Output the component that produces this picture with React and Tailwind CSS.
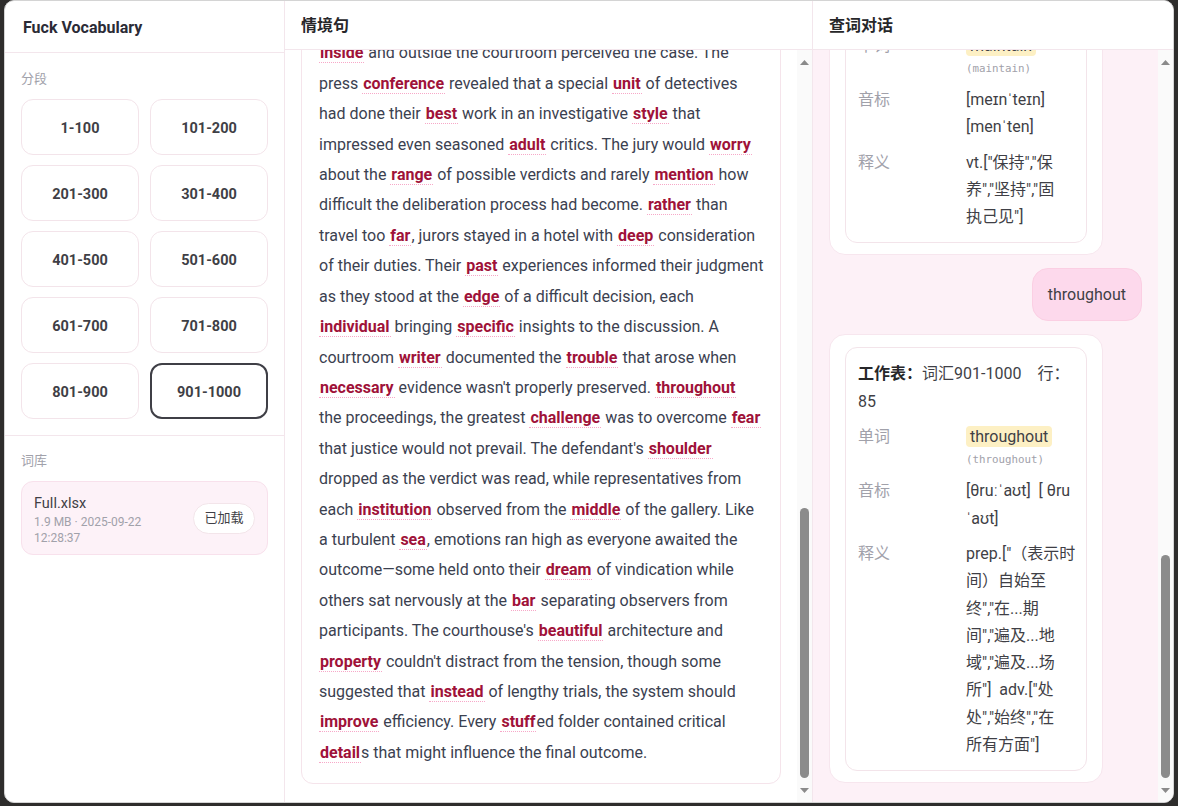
import React, { useLayoutEffect, useRef } from 'react'

const FONT = { fontFamily: 'Roboto, "Noto Sans CJK SC", sans-serif' }

const RANGES = ['1-100', '101-200', '201-300', '301-400', '401-500', '501-600', '601-700', '701-800', '801-900', '901-1000']

// passage, one entry per rendered line; [word] marks a vocabulary hit
const PASSAGE = [
  'The [trial] had drawn attention from every corner of the city,',
  'and for weeks the local papers could [discuss] little else. Each',
  '[morning] a crowd gathered on the marble steps, and the clerks',
  'kept a careful [record] of who came and went. Nobody could',
  'quite [explain] why this case, of all cases, had captured the',
  'public [mood] so completely, yet it was plain to see how people',
  '[inside] and outside the courtroom perceived the case. The',
  'press [conference] revealed that a special [unit] of detectives',
  'had done their [best] work in an investigative [style] that',
  'impressed even seasoned [adult] critics. The jury would [worry]',
  'about the [range] of possible verdicts and rarely [mention] how',
  'difficult the deliberation process had become. [rather] than',
  'travel too [far], jurors stayed in a hotel with [deep] consideration',
  'of their duties. Their [past] experiences informed their judgment',
  'as they stood at the [edge] of a difficult decision, each',
  '[individual] bringing [specific] insights to the discussion. A',
  'courtroom [writer] documented the [trouble] that arose when',
  "[necessary] evidence wasn't properly preserved. [throughout]",
  'the proceedings, the greatest [challenge] was to overcome [fear]',
  "that justice would not prevail. The defendant's [shoulder]",
  'dropped as the verdict was read, while representatives from',
  'each [institution] observed from the [middle] of the gallery. Like',
  'a turbulent [sea], emotions ran high as everyone awaited the',
  'outcome\u2014some held onto their [dream] of vindication while',
  'others sat nervously at the [bar] separating observers from',
  "participants. The courthouse's [beautiful] architecture and",
  "[property] couldn't distract from the tension, though some",
  'suggested that [instead] of lengthy trials, the system should',
  '[improve] efficiency. Every [stuff]ed folder contained critical',
  '[detail]s that might influence the final outcome.',
]

const CHAT = [
  { from: 'user', text: 'fear' },
  {
    from: 'bot',
    sheet: '901-1000',
    row: 84,
    word: 'fear',
    phon: ['[fɪə(r)]  [fɪr]'],
    def: ['n.["害怕","恐惧","担', '心"]  v.["害怕","担', '心"]'],
  },
  { from: 'user', text: 'maintain' },
  {
    from: 'bot',
    sheet: '901-1000',
    row: 62,
    word: 'maintain',
    phon: ['[meɪnˈteɪn]', '[menˈten]'],
    def: ['vt.["保持","保', '养","坚持","固', '执己见"]'],
  },
  { from: 'user', text: 'throughout' },
  {
    from: 'bot',
    sheet: '901-1000',
    row: 85,
    word: 'throughout',
    phon: ['[θruːˈaʊt]  [ θru', 'ˈaʊt]'],
    def: ['prep.["（表示时', '间）自始至', '终","在...期', '间","遍及...地', '域","遍及...场', '所"]  adv.["处', '处","始终","在', '所有方面"]'],
  },
]

function Line({ text }) {
  const parts = text.split(/(\[[^\]]+\])/)
  return (
    <div className="whitespace-nowrap">
      {parts.map((p, i) =>
        p.startsWith('[') && p.endsWith(']') ? (
          <span key={i} className="border-b border-dotted border-[#f7a8c8] px-px font-bold text-[#9f1239]">
            {p.slice(1, -1)}
          </span>
        ) : (
          <span key={i}>{p}</span>
        )
      )}
    </div>
  )
}

function Arrow({ down }) {
  return (
    <div className="flex h-[24px] items-center justify-center">
      <svg width="9" height="5" viewBox="0 0 9 5">
        <path d={down ? 'M0 0H9L4.5 5Z' : 'M4.5 0L9 5H0Z'} fill="#8a8a8a" />
      </svg>
    </div>
  )
}

function ScrollRail({ thumb }) {
  return (
    <div className="flex w-[15px] shrink-0 flex-col bg-[#fafafa]">
      <Arrow />
      <div className="flex flex-1 flex-col items-center justify-end">
        <div className={`w-[9px] rounded-full bg-[#8b8b8b] ${thumb}`} />
      </div>
      <Arrow down />
    </div>
  )
}

function Row({ label, children }) {
  return (
    <div className="flex">
      <div className="w-[108px] shrink-0 text-[#a1a1aa]">{label}</div>
      <div className="min-w-0 flex-1">{children}</div>
    </div>
  )
}

function BotCard({ m }) {
  return (
    <div className="w-[274px] rounded-2xl border border-[#f7e6ee] bg-white px-[15px] pb-[11px] pt-3">
      <div className="flex flex-col gap-2 rounded-xl border border-[#f3e4ea] p-3 text-[16px] leading-[27.3px] text-[#3f3f46]">
        <div>
          <span className="font-bold text-[#27272a]">工作表：</span>词汇{m.sheet}
          <span className="ml-[16px]">行：</span>
          {m.row}
        </div>
        <Row label="单词">
          <div>
            <span className="inline-block rounded-[4px] bg-[#fdf0c4] px-1 leading-[21px]">{m.word}</span>
          </div>
          <div className="text-[10.8px] leading-[19px] text-[#a1a1aa]" style={{ fontFamily: '"DejaVu Sans Mono", monospace' }}>
            ({m.word})
          </div>
        </Row>
        <Row label="音标">
          {m.phon.map((l, i) => (
            <div key={i} className="whitespace-pre">{l}</div>
          ))}
        </Row>
        <Row label="释义">
          {m.def.map((l, i) => (
            <div key={i} className="whitespace-pre">{l}</div>
          ))}
        </Row>
      </div>
    </div>
  )
}

export default function App() {
  const textRef = useRef(null)
  const chatRef = useRef(null)

  useLayoutEffect(() => {
    // both panes sit scrolled to their latest content
    if (textRef.current) textRef.current.scrollTop = textRef.current.scrollHeight
    if (chatRef.current) chatRef.current.scrollTop = chatRef.current.scrollHeight
  }, [])

  return (
    <div className="h-[806px] w-[1178px] bg-[#2e2d2c] pl-[4px]" style={FONT}>
      <div className="flex h-[803px] w-[1170px] overflow-hidden rounded-[10px] border border-[#d4d4d4] bg-white">
        {/* Sidebar */}
        <aside className="flex w-[280px] shrink-0 flex-col border-r border-[#f3e6ec]">
          <div className="flex h-[52px] shrink-0 items-center border-b border-[#f3e6ec] px-[18px] pt-[3px] text-[16px] font-bold text-[#2b2b36]">
            Fuck Vocabulary
          </div>
          <div className="px-4 pb-4 pt-4">
            <div className="mb-[10px] text-[13px] leading-5 text-[#a1a1aa]">分段</div>
            <div className="grid grid-cols-2 gap-x-[11px] gap-y-[10px]">
              {RANGES.map((r) => (
                <button
                  key={r}
                  className={`h-[56px] rounded-xl bg-white pt-[4px] text-[14.5px] font-bold text-[#3f3f46] ${
                    r === '901-1000' ? 'border-2 border-[#3f3f46]' : 'border border-[#f3e4ea]'
                  }`}
                >
                  {r}
                </button>
              ))}
            </div>
          </div>
          <div className="border-t border-[#f3e6ec] px-4 pt-[15px]">
            <div className="mb-[10px] text-[13px] leading-5 text-[#a1a1aa]">词库</div>
            <div className="flex items-center gap-3 rounded-xl border border-[#f8e1ec] bg-[#fdf2f8] px-3 pb-[8px] pt-[12px]">
              <div className="min-w-0 flex-1">
                <div className="text-[14.5px] leading-5 text-[#3f3f46]">Full.xlsx</div>
                <div className="text-[12px] leading-4 text-[#a1a1aa]">1.9 MB · 2025-09-22 12:28:37</div>
              </div>
              <button className="mb-[4px] h-[31px] w-[62px] shrink-0 rounded-full border border-[#f3e5ea] bg-white text-[13px] text-[#3f3f46]">
                已加载
              </button>
            </div>
          </div>
        </aside>

        {/* Passage */}
        <main className="flex w-[527px] shrink-0 flex-col">
          <div className="flex h-[49px] shrink-0 items-center border-b border-[#f3e6ec] px-4 pt-[2px] text-[16px] font-bold text-[#27272a]">
            情境句
          </div>
          <div className="flex min-h-0 flex-1">
            <div
              ref={textRef}
              className="min-h-0 flex-1 overflow-y-auto px-4 pb-[18px] pt-4 [scrollbar-width:none] [&::-webkit-scrollbar]:hidden"
            >
              <div className="rounded-xl border border-[#f5e4eb] bg-white px-[17px] py-[15px] text-[16px] leading-[30.4px] text-[#3b4150]">
                {PASSAGE.map((l, i) => (
                  <Line key={i} text={l} />
                ))}
              </div>
            </div>
            <ScrollRail thumb="h-[270px]" />
          </div>
        </main>

        {/* Lookup chat */}
        <section className="flex min-w-0 flex-1 flex-col border-l border-[#f3e6ec]">
          <div className="flex h-[49px] shrink-0 items-center border-b border-[#f3e6ec] bg-white px-4 pt-[2px] text-[16px] font-bold text-[#27272a]">
            查词对话
          </div>
          <div className="flex min-h-0 flex-1 bg-[#fdf1f7]">
            <div
              ref={chatRef}
              className="min-h-0 flex-1 overflow-y-auto px-4 pb-[19px] pt-4 [scrollbar-width:none] [&::-webkit-scrollbar]:hidden"
            >
              <div className="flex flex-col gap-[13px]">
                {CHAT.map((m, i) =>
                  m.from === 'user' ? (
                    <div
                      key={i}
                      className="self-end rounded-2xl border border-[#fbcfe3] bg-[#fdd9ec] px-[15px] py-[15px] text-[16px] leading-[21px] text-[#3f3f46]"
                    >
                      {m.text}
                    </div>
                  ) : (
                    <BotCard key={i} m={m} />
                  )
                )}
              </div>
            </div>
            <ScrollRail thumb="h-[223px]" />
          </div>
        </section>
      </div>
    </div>
  )
}
